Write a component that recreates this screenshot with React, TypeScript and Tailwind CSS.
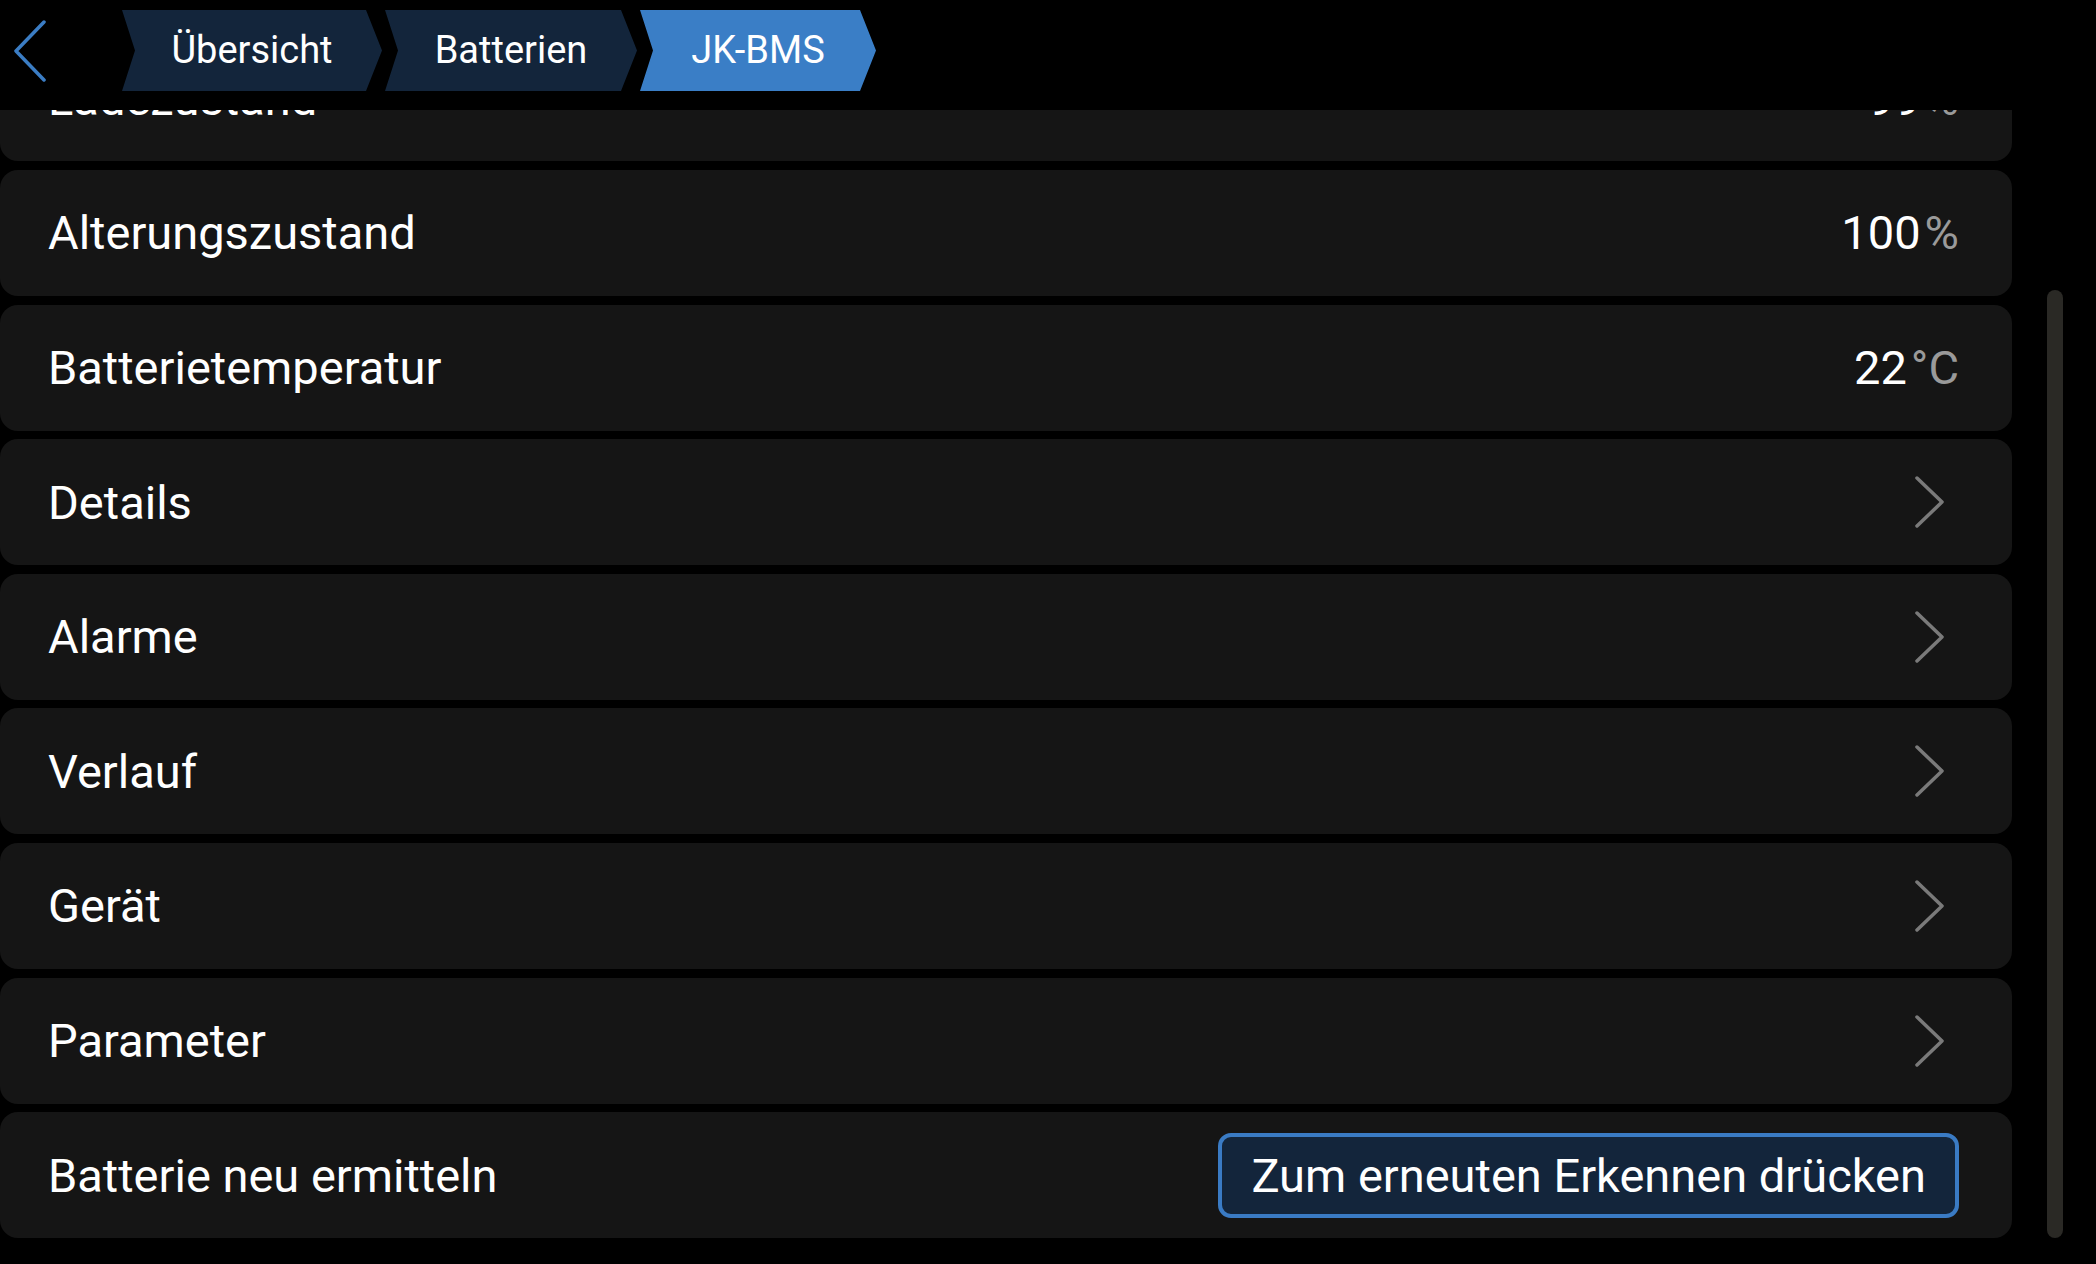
import React from "react";

type Row =
  | { kind: "value"; label: string; value: string; unit: string }
  | { kind: "link"; label: string }
  | { kind: "button"; label: string; action: string };

const rows: Row[] = [
  { kind: "value", label: "Ladezustand", value: "99", unit: "%" },
  { kind: "value", label: "Alterungszustand", value: "100", unit: "%" },
  { kind: "value", label: "Batterietemperatur", value: "22", unit: "°C" },
  { kind: "link", label: "Details" },
  { kind: "link", label: "Alarme" },
  { kind: "link", label: "Verlauf" },
  { kind: "link", label: "Gerät" },
  { kind: "link", label: "Parameter" },
  { kind: "button", label: "Batterie neu ermitteln", action: "Zum erneuten Erkennen drücken" },
];

function Chevron() {
  return (
    <svg width="30" height="52" viewBox="0 0 30 52" className="mr-[15px]">
      <polyline
        points="3,2 28,26 3,50"
        fill="none"
        stroke="#7a7a7a"
        strokeWidth="3.5"
        strokeLinecap="round"
        strokeLinejoin="round"
      />
    </svg>
  );
}

function BackChevron() {
  return (
    <svg width="34" height="62" viewBox="0 0 34 62">
      <polyline
        points="31,2 3,31 31,60"
        fill="none"
        stroke="#3b7dc4"
        strokeWidth="3.5"
        strokeLinecap="round"
        strokeLinejoin="round"
      />
    </svg>
  );
}

function Crumb({ label, width, active }: { label: string; width: string; active?: boolean }) {
  return (
    <div
      className={`${width} flex h-[81px] items-center justify-center text-[38px] text-white ${
        active ? "bg-[#3a7ec6]" : "bg-[#13253b]"
      } [clip-path:polygon(0_0,calc(100%_-_16px)_0,100%_50%,calc(100%_-_16px)_100%,0_100%,13px_50%)]`}
    >
      {label}
    </div>
  );
}

export default function App() {
  return (
    <div className="relative h-[1264px] w-[2096px] overflow-hidden bg-black text-white [font-family:Roboto,'Liberation_Sans',sans-serif]">
      <div className="flex h-full">
        {/* list, scrolled a little */}
        <div className="flex w-[2012px] flex-col gap-[8.6px] pt-[35.4px]">
          {rows.map((r) => (
            <div
              key={r.label}
              className="flex h-[126px] shrink-0 items-center justify-between rounded-[18px] bg-[#151515] pl-[48px] pr-[53px] text-[47px] leading-none"
            >
              <span>{r.label}</span>
              {r.kind === "value" && (
                <span>
                  {r.value}
                  <span className="ml-[4px] text-[#9a9a9a]">{r.unit}</span>
                </span>
              )}
              {r.kind === "link" && <Chevron />}
              {r.kind === "button" && (
                <button className="flex h-[85px] items-center rounded-[13px] border-[4px] border-[#3a7bc4] bg-[#13253b] px-[29px] text-[47px] leading-none text-white">
                  {r.action}
                </button>
              )}
            </div>
          ))}
        </div>

        {/* scrollbar */}
        <div className="ml-[35px] w-[16px] pt-[290px]">
          <div className="h-[948px] rounded-full bg-[#2a2925]" />
        </div>
      </div>

      {/* header over the list */}
      <header className="absolute inset-x-0 top-0 flex h-[110px] items-start bg-black">
        <div className="ml-[13px] mt-[20px]">
          <BackChevron />
        </div>
        <div className="ml-[75px] mt-[10px] flex gap-[3px]">
          <Crumb label="Übersicht" width="w-[260px]" />
          <Crumb label="Batterien" width="w-[252px]" />
          <Crumb label="JK-BMS" width="w-[236px]" active />
        </div>
      </header>
    </div>
  );
}
